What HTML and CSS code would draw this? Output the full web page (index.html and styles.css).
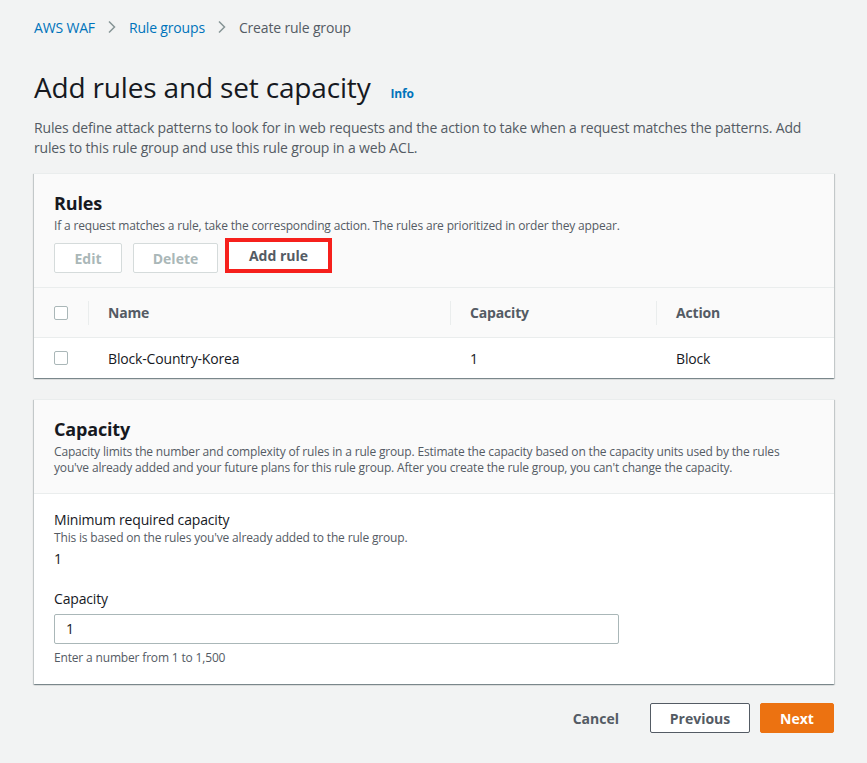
FILE: index.html
```html
<!DOCTYPE html>
<html lang="en">
<head>
<meta charset="utf-8">
<title>Add rules and set capacity</title>
<link rel="stylesheet" href="styles.css">
</head>
<body>
<div class="page">
  <nav class="crumbs">
    <a class="crumb-link">AWS WAF</a>
    <svg class="chev" width="10" height="14" viewBox="0 0 10 14"><path d="M2 1.5 L7.5 7 L2 12.5" fill="none" stroke="#879596" stroke-width="1.5"/></svg>
    <a class="crumb-link">Rule groups</a>
    <svg class="chev" width="10" height="14" viewBox="0 0 10 14"><path d="M2 1.5 L7.5 7 L2 12.5" fill="none" stroke="#879596" stroke-width="1.5"/></svg>
    <span class="crumb-current">Create rule group</span>
  </nav>

  <div class="title-row">
    <h1 class="title">Add rules and set capacity</h1>
    <a class="info">Info</a>
  </div>
  <p class="lead">Rules define attack patterns to look for in web requests and the action to take when a request matches the patterns. Add rules to this rule group and use this rule group in a web ACL.</p>

  <section class="card">
    <div class="card-head head-rules">
      <h2 class="card-title">Rules</h2>
      <p class="card-desc">If a request matches a rule, take the corresponding action. The rules are prioritized in order they appear.</p>
      <div class="actions">
        <button class="btn btn-disabled btn-edit">Edit</button>
        <button class="btn btn-disabled btn-delete">Delete</button>
        <span class="highlight"><button class="btn btn-normal btn-add">Add rule</button></span>
      </div>
    </div>
    <div class="table">
      <div class="trow thead">
        <div class="cell c-check"><span class="checkbox"></span></div>
        <div class="cell c-name sep">Name</div>
        <div class="cell c-cap sep">Capacity</div>
        <div class="cell c-act sep">Action</div>
      </div>
      <div class="trow tbody">
        <div class="cell c-check"><span class="checkbox"></span></div>
        <div class="cell c-name">Block-Country-Korea</div>
        <div class="cell c-cap">1</div>
        <div class="cell c-act">Block</div>
      </div>
    </div>
  </section>

  <section class="card card-cap">
    <div class="card-head head-cap">
      <h2 class="card-title">Capacity</h2>
      <p class="card-desc">Capacity limits the number and complexity of rules in a rule group. Estimate the capacity based on the capacity units used by the rules you've already added and your future plans for this rule group. After you create the rule group, you can't change the capacity.</p>
    </div>
    <div class="card-body">
      <div class="field">
        <div class="label">Minimum required capacity</div>
        <div class="hint">This is based on the rules you've already added to the rule group.</div>
        <div class="value">1</div>
      </div>
      <div class="field field-input">
        <div class="label">Capacity</div>
        <div class="input">1</div>
        <div class="hint hint-below">Enter a number from 1 to 1,500</div>
      </div>
    </div>
  </section>

  <div class="footer">
    <button class="btn-link">Cancel</button>
    <button class="btn btn-normal btn-prev">Previous</button>
    <button class="btn btn-primary">Next</button>
  </div>
</div>
</body>
</html>
```

FILE: styles.css
```css
* { box-sizing: border-box; }
html, body { margin: 0; padding: 0; }
body {
  background: #f2f3f3;
  font-family: "Open Sans", "Noto Sans", Arial, sans-serif;
  color: #16191f;
  font-size: 14px;
  letter-spacing: -0.012em;
}
.page {
  padding: 15px 33px 30px 34px;
  width: 867px;
}
.crumbs {
  display: flex;
  align-items: center;
  height: 24px;
  font-size: 14px;
  gap: 12px;
}
.crumb-link { color: #0073bb; }
.crumb-current { color: #545b64; }
.chev { display: block; }

.title-row {
  display: flex;
  align-items: baseline;
  margin-top: 30px;
}
.title {
  margin: 0;
  font-size: 28px;
  font-weight: 400;
  line-height: 36px;
  color: #16191f;
}
.info {
  margin-left: 20px;
  color: #0073bb;
  font-size: 12px;
  font-weight: 700;
}
.lead {
  margin: 13px 0 0 0;
  font-size: 14px;
  line-height: 20px;
  color: #545b64;
}

.card {
  margin-top: 15px;
  background: #fff;
  border-top: 1px solid #eaeded;
  box-shadow: 0 1px 1px 0 rgba(0,28,36,0.3), 1px 1px 1px 0 rgba(0,28,36,0.15), -1px 1px 1px 0 rgba(0,28,36,0.15);
}
.card-head {
  background: #fafafa;
  padding: 17px 20px 14px 20px;
  border-bottom: 1px solid #eaeded;
}
.head-rules { padding-bottom: 14px; }
.card-title {
  margin: 0;
  font-size: 18px;
  line-height: 24px;
  font-weight: 700;
  color: #16191f;
}
.card-desc {
  margin: 3px 0 0 0;
  font-size: 12px;
  line-height: 16px;
  color: #545b64;
}
.actions {
  display: flex;
  align-items: flex-start;
  gap: 11px;
  margin-top: 9px;
  height: 30px;
}
.btn {
  font-family: inherit;
  font-size: 14px;
  font-weight: 700;
  height: 30px;
  border-radius: 2px;
  padding: 0;
  white-space: nowrap;
  letter-spacing: 0;
  cursor: pointer;
}
.btn-disabled {
  background: #fff;
  border: 1px solid #d5dbdb;
  color: #aab7b8;
}
.btn-edit { width: 68px; }
.btn-delete { width: 85px; }
.btn-normal {
  background: #fff;
  border: 1px solid #545b64;
  color: #545b64;
}
.highlight {
  display: inline-flex;
  border: 4px solid #f6201c;
  margin: -5px 0 0 -4px;
  height: 35px;
}
.btn-add {
  border: none;
  border-radius: 0;
  width: 99px;
  height: 27px;
}

.trow {
  display: flex;
  align-items: center;
  font-size: 14px;
}
.thead {
  height: 50px;
  background: #fafafa;
  border-bottom: 1px solid #eaeded;
  font-weight: 700;
  color: #545b64;
}
.tbody {
  height: 40px;
  color: #16191f;
}
.cell { position: relative; }
.c-check { width: 54px; padding-left: 20px; display: flex; align-items: center; }
.c-name { width: 362px; padding-left: 20px; }
.c-cap { width: 206px; padding-left: 20px; }
.c-act { flex: 1; padding-left: 20px; }
.thead .sep { line-height: 20px; }
.thead .sep::before {
  content: "";
  position: absolute;
  left: 0;
  top: -2px;
  height: 24px;
  border-left: 1px solid #eaeded;
}
.checkbox {
  display: block;
  width: 14px;
  height: 14px;
  border: 1px solid #aab7b8;
  border-radius: 2px;
  background: #fff;
}

.card-cap { margin-top: 21px; }
.head-cap { padding: 17px 20px 17px 20px; }
.card-body { padding: 16px 20px 18px 20px; }
.label {
  font-size: 14px;
  line-height: 20px;
  color: #16191f;
}
.hint {
  font-size: 12px;
  line-height: 16px;
  color: #545b64;
}
.value {
  margin-top: 3px;
  font-size: 14px;
  line-height: 20px;
  color: #16191f;
}
.field-input { margin-top: 20px; }
.input {
  margin-top: 5px;
  width: 565px;
  height: 30px;
  border: 1px solid #aab7b8;
  border-radius: 2px;
  background: #fff;
  padding: 0 11px;
  font-size: 14px;
  line-height: 28px;
  color: #16191f;
}
.hint-below { margin-top: 6px; }

.footer {
  display: flex;
  justify-content: flex-end;
  align-items: center;
  margin-top: 19px;
}
.btn-link {
  background: none;
  border: none;
  font-family: inherit;
  font-size: 14px;
  font-weight: 700;
  color: #545b64;
  padding: 0;
  margin-right: 31px;
  height: 30px;
}
.btn-prev { width: 100px; margin-right: 10px; }
.btn-primary {
  width: 74px;
  background: #ec7211;
  border: 1px solid #ec7211;
  color: #fff;
}
```
